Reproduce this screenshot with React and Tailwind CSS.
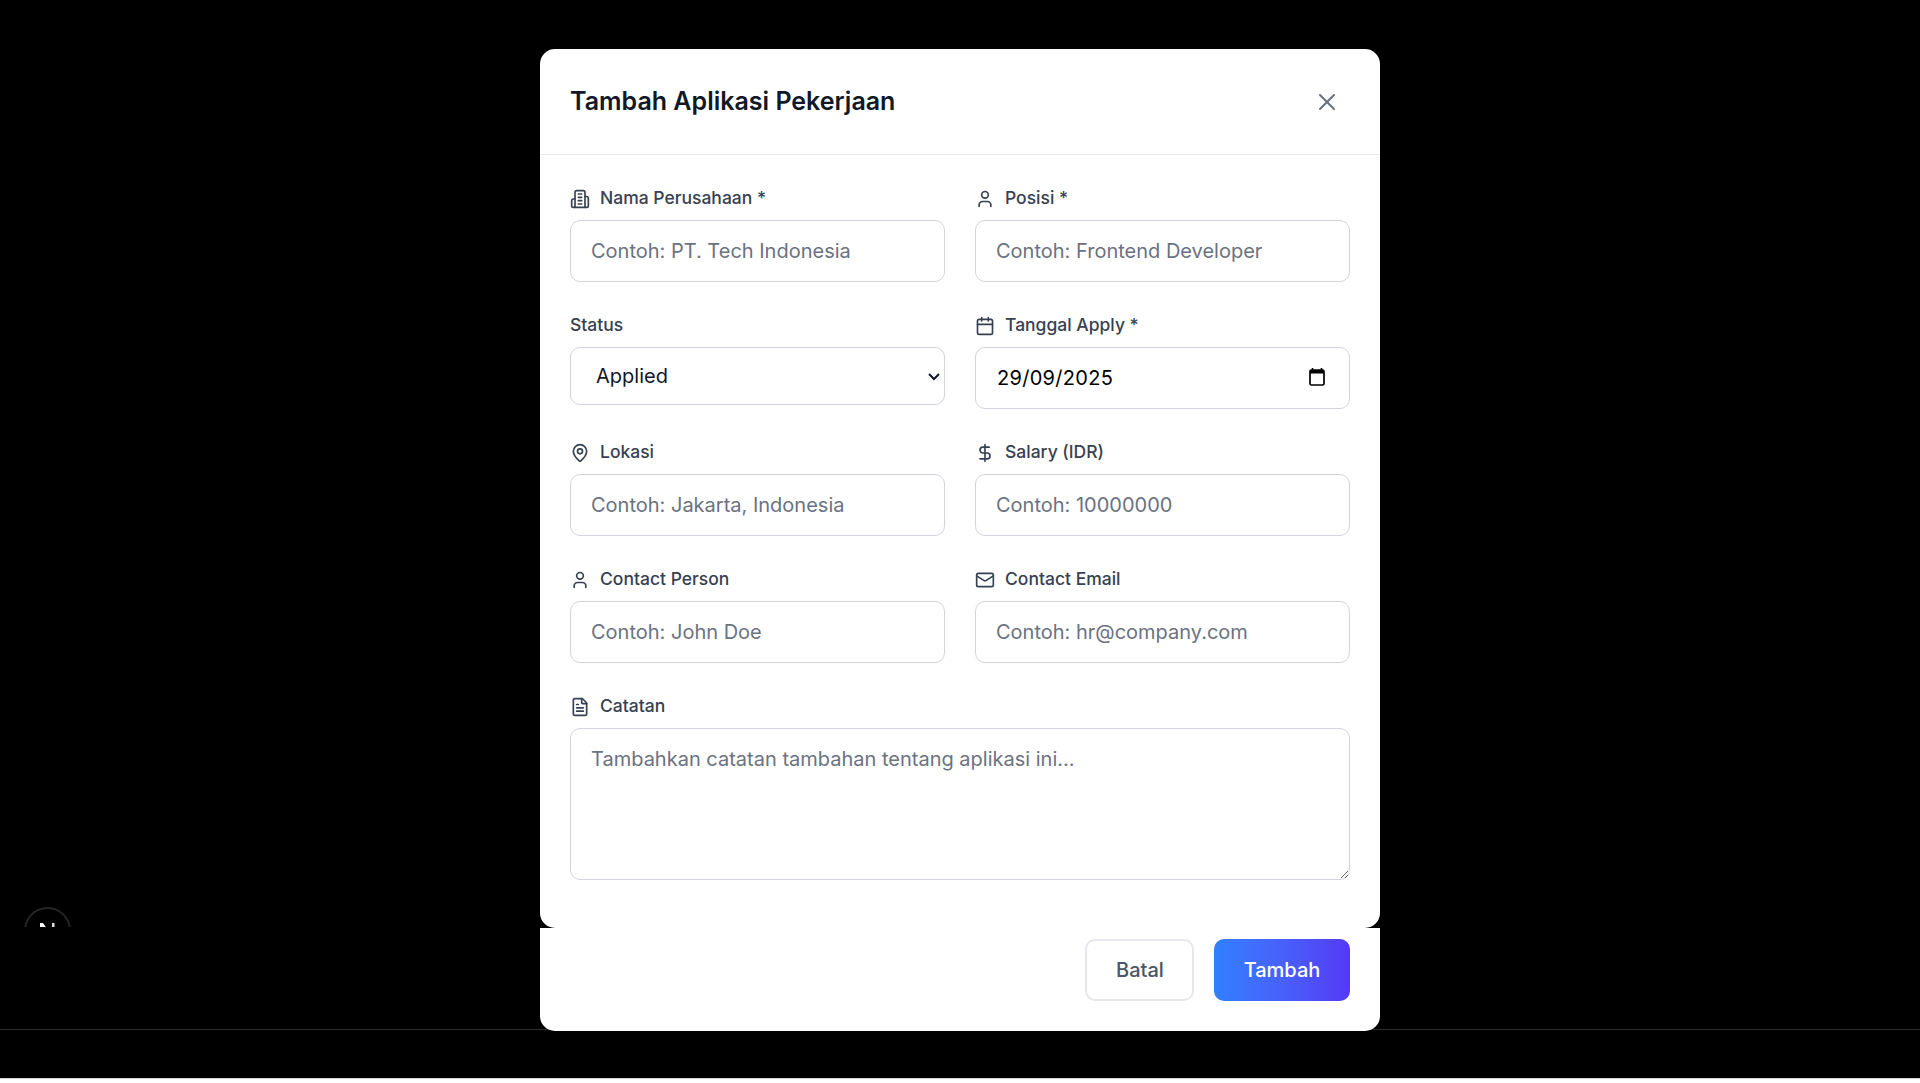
import React from "react";
import { User, Calendar, MapPin, DollarSign, Mail, FileText, X } from "lucide-react";

const inputCls =
  "w-full h-[62px] px-5 border border-[#d1d5db] rounded-[10px] bg-white text-[20px] text-[#111827] placeholder:text-[#6b7280] outline-none";

// older lucide Building2, the current one has a different shape
function Building({ className }) {
  return (
    <svg className={className} viewBox="0 0 24 24" fill="none" stroke="currentColor" strokeWidth="2" strokeLinecap="round" strokeLinejoin="round">
      <path d="M6 22V4a2 2 0 0 1 2-2h8a2 2 0 0 1 2 2v18Z" />
      <path d="M6 12H4a2 2 0 0 0-2 2v6a2 2 0 0 0 2 2h2" />
      <path d="M18 9h2a2 2 0 0 1 2 2v9a2 2 0 0 1-2 2h-2" />
      <path d="M10 6h4" />
      <path d="M10 10h4" />
      <path d="M10 14h4" />
      <path d="M10 18h4" />
    </svg>
  );
}

// same look as the browser's date picker indicator
function PickerIcon({ className }) {
  return (
    <svg className={className} viewBox="0 0 16 18" fill="none">
      <path d="M3.5 0v2M12.5 0v2" stroke="#000" strokeWidth="1.6" />
      <rect x="1" y="2" width="14" height="15" rx="1.5" stroke="#000" strokeWidth="1.7" />
      <rect x="1" y="2" width="14" height="3.5" fill="#000" />
    </svg>
  );
}

function Label({ icon: Icon, children }) {
  return (
    <label className="flex items-center h-[25px] pt-[2px] mb-[10px] text-[17.5px] font-medium text-[#374151]">
      {Icon && <Icon className="w-5 h-5 mr-[10px]" strokeWidth={2} />}
      {children}
    </label>
  );
}

function Field({ icon, label, placeholder }) {
  return (
    <div>
      <Label icon={icon}>{label}</Label>
      <input className={inputCls} placeholder={placeholder} />
    </div>
  );
}

export default function App() {
  return (
    <div className="relative h-[1083px] bg-black overflow-hidden font-['Inter',sans-serif]">
      {/* next dev indicator, cut off by the overlay */}
      <div className="absolute left-[24px] top-[907px] w-[47px] h-[20px] overflow-hidden">
        <svg className="w-[47px] h-[47px]" viewBox="0 0 47 47">
          <circle cx="23.5" cy="23.5" r="22.5" fill="none" stroke="#262626" strokeWidth="2" />
          <path d="M16 16h3l7 10v2h-3l-4-6v6h-3Z" fill="#fff" />
          <rect x="28" y="16" width="2.5" height="12" fill="#ddd" />
        </svg>
      </div>
      <div className="absolute left-0 right-0 top-[1029px] h-px bg-[#2a2a2a]" />
      <div className="absolute left-0 right-0 top-[1078px] h-[5px] bg-white border-t border-[#d4d4d4]" />

      <div className="relative w-[840px] mx-auto pt-[49px]">
        <div className="bg-white rounded-[15px] h-[879px]">
          <div className="flex items-center justify-between h-[106px] px-[30px] border-b border-[#e5e7eb]">
            <h2 className="text-[25px] font-semibold text-[#111827]">Tambah Aplikasi Pekerjaan</h2>
            <X className="w-[28px] h-[28px] text-[#6b7280] mr-[9px]" strokeWidth={1.8} />
          </div>
          <div className="px-[30px] pt-[30px]">
            <div className="grid grid-cols-2 gap-x-[30px] gap-y-[30px]">
              <Field icon={Building} label="Nama Perusahaan *" placeholder="Contoh: PT. Tech Indonesia" />
              <Field icon={User} label="Posisi *" placeholder="Contoh: Frontend Developer" />
              <div>
                <Label>Status</Label>
                <select className="[zoom:1.25] w-full h-[46.4px] px-4 border border-[#d1d5db] rounded-lg bg-white text-base text-[#111827] outline-none">
                  <option>Applied</option>
                </select>
              </div>
              <div>
                <Label icon={Calendar}>Tanggal Apply *</Label>
                <div className="relative">
                  {/* text input: the sandbox browser only formats dates as mm/dd */}
                  <input defaultValue="29/09/2025" className={inputCls + " !text-black !pl-[21px] tracking-[0.3px]"} />
                  <PickerIcon className="absolute right-[25px] top-[21px] w-[16px] h-[18px]" />
                </div>
              </div>
              <Field icon={MapPin} label="Lokasi" placeholder="Contoh: Jakarta, Indonesia" />
              <Field icon={DollarSign} label="Salary (IDR)" placeholder="Contoh: 10000000" />
              <Field icon={User} label="Contact Person" placeholder="Contoh: John Doe" />
              <Field icon={Mail} label="Contact Email" placeholder="Contoh: hr@company.com" />
            </div>
            <div className="mt-[30px]">
              <Label icon={FileText}>Catatan</Label>
              <textarea
                className="[zoom:1.25] block w-full h-[121.6px] px-4 py-3 border border-[#d1d5db] rounded-lg bg-white text-base placeholder:text-[#6b7280] outline-none"
                placeholder="Tambahkan catatan tambahan tentang aplikasi ini..."
              />
            </div>
          </div>
        </div>
        <div className="bg-white rounded-b-[15px] h-[103px] flex items-start justify-end gap-5 px-[30px] pt-[11px]">
          <button className="h-[62px] w-[109px] pl-[1px] border-2 border-[#e5e7eb] rounded-[10px] text-[20px] font-medium text-[#4b5563]">Batal</button>
          <button className="h-[62px] w-[136px] rounded-[10px] text-[20px] font-medium text-white bg-gradient-to-r from-[#2f80ff] to-[#5438f5]">Tambah</button>
        </div>
      </div>
    </div>
  );
}
